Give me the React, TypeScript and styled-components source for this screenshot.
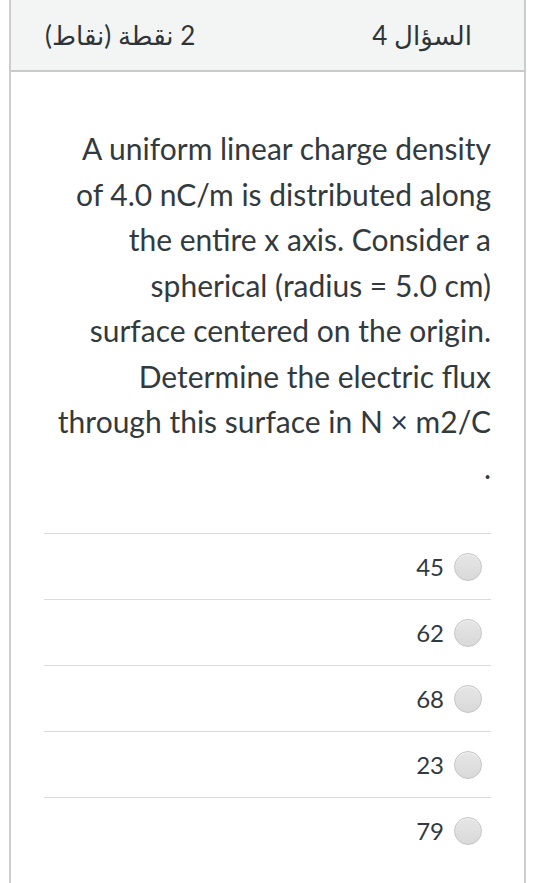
import React from "react";
import styled, { createGlobalStyle } from "styled-components";

const Global = createGlobalStyle`
  html, body { margin: 0; padding: 0; background: #ffffff; }
  body { font-family: "Lato", "DejaVu Sans", sans-serif; color: #333a3d; }
`;

const Page = styled.div`
  width: 540px;
  height: 883px;
  overflow: hidden;
  padding-left: 9px;
  box-sizing: border-box;
`;

const Card = styled.div`
  width: 517px;
  height: 883px;
  box-sizing: border-box;
  border-left: 2px solid #cdcdcd;
  border-right: 2px solid #cdcdcd;
  background: #ffffff;
`;

const Header = styled.div`
  direction: rtl;
  height: 72px;
  box-sizing: border-box;
  background: #f3f4f4;
  border-bottom: 2px solid #c9c9c9;
  display: flex;
  align-items: center;
  justify-content: space-between;
  padding: 0 52px 0 34px;
  font-family: "Lato", "DejaVu Sans", sans-serif;
  font-size: 26px;
  color: #2f3437;
`;

const HeaderText = styled.span`
  white-space: nowrap;
`;

const Body = styled.div`
  padding: 54px 33px 0 33px;
`;

const Question = styled.p`
  margin: 0;
  direction: rtl;
  text-align: right;
  font-size: 30px;
  line-height: 45.5px;
  color: #333a3d;
`;

const Ltr = styled.span`
  direction: ltr;
  unicode-bidi: embed;
`;

const Options = styled.div`
  margin-top: 43px;
`;

const OptionRow = styled.label`
  display: flex;
  align-items: center;
  justify-content: flex-end;
  gap: 10px;
  height: 66px;
  border-top: 1px solid #dcdcdc;
  padding-right: 9px;
  box-sizing: border-box;
`;

const OptionText = styled.span`
  font-size: 24px;
  color: #333a3d;
`;

const Radio = styled.span`
  width: 26px;
  height: 26px;
  border-radius: 50%;
  border: 1px solid #c4c4c4;
  background: linear-gradient(#e6e6e6, #d9d9d9);
  box-shadow: inset 0 1px 1px rgba(255, 255, 255, 0.6);
`;

const options = ["45", "62", "68", "23", "79"];

export default function App() {
  return (
    <>
      <Global />
      <Page>
        <Card>
          <Header>
            <HeaderText>السؤال 4</HeaderText>
            <HeaderText>2 نقطة (نقاط)</HeaderText>
          </Header>
          <Body>
            <Question>
              <Ltr>A uniform linear charge density</Ltr>
              <br />
              <Ltr>of 4.0 nC/m is distributed along</Ltr>
              <br />
              <Ltr>the entire x axis. Consider a</Ltr>
              <br />
              <Ltr>spherical (radius = 5.0 cm)</Ltr>
              <br />
              <Ltr>surface centered on the origin.</Ltr>
              <br />
              <Ltr>Determine the electric flux</Ltr>
              <br />
              <Ltr>through this surface in N × m2/C</Ltr>
              <br />.
            </Question>
            <Options>
              {options.map((o) => (
                <OptionRow key={o}>
                  <OptionText>{o}</OptionText>
                  <Radio />
                </OptionRow>
              ))}
            </Options>
          </Body>
        </Card>
      </Page>
    </>
  );
}
